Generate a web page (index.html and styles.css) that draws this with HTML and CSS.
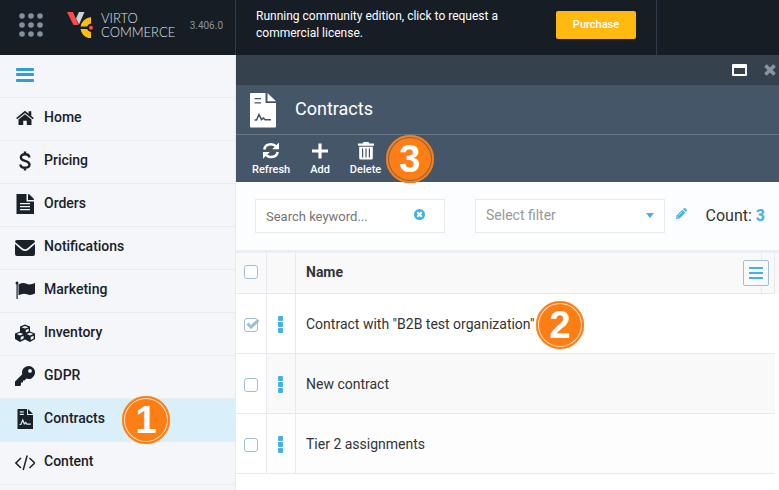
FILE: index.html
```html
<!DOCTYPE html>
<html lang="en">
<head>
<meta charset="utf-8">
<title>Contracts</title>
<link rel="stylesheet" href="styles.css">
</head>
<body>
<header class="topbar">
  <div class="brand">
    <button class="apps" aria-label="Applications">
      <svg width="24" height="24" viewBox="0 0 24 24" fill="#8390a0"><circle cx="3" cy="3" r="2.8"/><circle cx="12" cy="3" r="2.8"/><circle cx="21" cy="3" r="2.8"/><circle cx="3" cy="12" r="2.8"/><circle cx="12" cy="12" r="2.8"/><circle cx="21" cy="12" r="2.8"/><circle cx="3" cy="21" r="2.8"/><circle cx="12" cy="21" r="2.8"/><circle cx="21" cy="21" r="2.8"/></svg>
    </button>
    <a class="logo" href="#">
      <svg width="26" height="26" viewBox="0 0 26 26"><path fill="#ff4a4a" d="M0 0h6l5.500 13H6.500z"/><path fill="#d0d2d4" d="M12 0h5.500L12 12.500 9 6.500z"/><path fill="#ffbb10" d="M24 5v6.500q-3 .5-4 3H13.500Q15 6.500 24 5zM13.500 17H20q1 2.500 4 3V26.500Q15 25.500 13.500 17z"/><circle cx="24" cy="15.700" r="2" fill="#ff4a4a"/></svg>
      <span class="logo-text"><span>VIRTO</span><span>COMMERCE</span></span>
    </a>
    <span class="version">3.406.0</span>
  </div>
  <div class="license">
    <p class="license-text">Running community edition, click to request a commercial license.</p>
    <button class="purchase">Purchase</button>
  </div>
</header>
<div class="workspace">
  <nav class="sidebar">
    <div class="burger-row">
      <button class="burger" aria-label="Toggle menu"><svg width="18" height="14" viewBox="0 0 18 14" fill="#319dd5"><rect width="18" height="3" rx="1"/><rect y="5" width="18" height="3" rx="1"/><rect y="11" width="18" height="3" rx="1"/></svg></button>
    </div>
    <a class="item" href="#"><svg class="nav-icon" viewBox="0 0 20 20"><path d="M10 6.200 3.500 11.600V17h4.700v-4.300h3.600V17h4.700v-5.400z"/><path d="M10 2.800 1.200 10.100l1 1.100L10 4.900l7.800 6.300 1-1.100-2.500-2.100V3.200h-2.700v2.500z"/></svg><span>Home</span></a>
    <a class="item" href="#"><svg class="nav-icon" viewBox="0 0 20 20"><path fill="none" stroke="#1a2129" stroke-width="2.400" d="M14.300 6.500Q14.200 3.300 10 3.300T5.900 6.500Q5.900 8.800 10 9.800T14.500 13.500Q14.500 16.700 10 16.700T5.500 13.500M10 .5v3M10 16.500v3"/></svg><span>Pricing</span></a>
    <a class="item" href="#"><svg class="nav-icon" viewBox="0 0 20 20"><path fill-rule="evenodd" d="M1.500 0h10v7.500h7.500V20H1.500zM5 9v1.300h10V9zm0 3v1.300h10V12zm0 3v1.300h10V15z"/><path d="M13 0v6h6q0-1-.5-1.500L14.500.5Q14 0 13 0z"/></svg><span>Orders</span></a>
    <a class="item" href="#"><svg class="nav-icon" viewBox="0 0 20 20"><path d="M2 3h16q2 0 2 2l-7.500 6.200q-2.500 2-5 0L0 5q0-2 2-2z"/><path d="M0 7l6.500 5.700q3.500 2.500 7 0L20 7v10q0 2-2 2H2q-2 0-2-2z"/></svg><span>Notifications</span></a>
    <a class="item" href="#"><svg class="nav-icon" viewBox="0 0 20 20"><path d="M3.500 4.500q4.500-2.500 8-.7 3.500 1.700 8.500-.8v10.500q-4.500 2.500-8 .8t-8.500.9z"/><circle cx="2" cy="3" r="1.500"/><path d="M1.500 3h1.200v16H1.500z"/></svg><span>Marketing</span></a>
    <a class="item" href="#"><svg class="nav-icon" viewBox="0 0 20 20"><path fill-rule="evenodd" d="M10 1.500l5 2v5l5 2v5.500L15 19l-5-2.500L5 19l-5-3v-5.500l5-2v-5zM6.500 4.200 10 5.500l3.500-1.300L10 2.900zM10.800 7v2.600l2.900-1.300V5.700zM1.700 11 5 12.400 8.300 11 5 9.700zm10 0 3.300 1.400 3.300-1.400L15 9.700zM5.700 14v3l2.900-1.500v-2.700zm10 0v3l2.900-1.500v-2.700z"/></svg><span>Inventory</span></a>
    <a class="item" href="#"><svg class="nav-icon" viewBox="0 0 20 20"><path fill-rule="evenodd" d="M13.500 0A6.500 6.500 0 1 1 11.300 12.600L9.600 14.500H8V16.500H6V19L5 20H0V15.500L7.300 8.300A6.500 6.500 0 0 1 13.500 0zM15 3a1.900 1.900 0 1 0 0 3.800A1.900 1.900 0 0 0 15 3z"/></svg><span>GDPR</span></a>
    <a class="item active" href="#"><svg class="nav-icon" viewBox="0 0 20 20"><path fill-rule="evenodd" d="M2.500 0H12v6h6v14H2.500zM4.800 2.300v1.200h4V2.300zm0 2.500V6h4V4.800z"/><path d="M13 0v5h5z"/><path fill="none" stroke="#d9eff9" stroke-width="1.200" d="M4.500 15.500h1.300l2-4.500 1.500 4 1.500-1.500 1 1.700h4"/></svg><span>Contracts</span><span class="badge badge-nav">1</span></a>
    <a class="item" href="#"><svg class="nav-icon" viewBox="0 0 20 20"><path fill="none" stroke="#1a2129" stroke-width="1.500" d="M6 6 .9 11 6 16M14.500 6l5.200 5-5.200 5M12.200 3.500l-4 14.500"/></svg><span>Content</span></a>
  </nav>
  <main class="blade">
    <div class="blade-controls">
      <button aria-label="Maximize"><svg width="15" height="12" viewBox="0 0 15 12"><path fill="#fff" fill-rule="evenodd" d="M1 0h13q1 0 1 1v10q0 1-1 1H1q-1 0-1-1V1q0-1 1-1zM2 4v6h11V4z"/></svg></button>
      <button aria-label="Close"><svg width="12" height="12" viewBox="0 0 12 12"><path stroke="#8a949e" stroke-width="3.600" d="M1.500 1.500l9 9M10.500 1.500l-9 9"/></svg></button>
    </div>
    <div class="blade-title">
      <svg width="26" height="35" viewBox="0 0 26 35"><path fill="#fff" fill-rule="evenodd" d="M1 0h14.500v10H26v23.500q0 1-1 1H1q-1 0-1-1V1q0-1 1-1zM4.500 5v1.300H11V5zm0 4.300v1.300H11V9.300z"/><path fill="#fff" d="M17.500 0v8.300H26z"/><path fill="none" stroke="#465669" stroke-width="1.600" d="M4.500 27h2l2.500-5.500 2.500 5 2-1.500 1.500 1.700h6"/></svg>
      <h1>Contracts</h1>
    </div>
    <div class="toolbar">
      <button class="tool"><svg width="18" height="20" viewBox="0 0 18 20"><path fill="none" stroke="#fff" stroke-width="2.600" d="M2.300 8.500Q3.200 3.200 9 3.200q3.200 0 5.400 2.500M15.700 11q-1 5-6.700 5-3.200 0-5.400-2.300"/><path fill="#fff" d="M17 1.500v6.800h-6.800zM1 17.700v-6.800h6.800z"/></svg>Refresh</button>
      <button class="tool"><svg width="18" height="20" viewBox="0 0 18 20"><path stroke="#fff" stroke-width="3.200" d="M9 2.500v15M1 10h16"/></svg>Add</button>
      <button class="tool"><svg width="18" height="20" viewBox="0 0 18 20"><path fill="#fff" fill-rule="evenodd" d="M1 2.500h4.500L6.500 1h5l1 1.500H17v2.200H1zM2.200 5.700h13.600V17q0 1.500-1.500 1.500H3.700q-1.500 0-1.500-1.500zM5 7.500v9h1.200v-9zm3.400 0v9h1.200v-9zm3.400 0v9H13v-9z"/></svg>Delete<span class="badge badge-tool">3</span></button>
    </div>
    <div class="filters">
      <div class="field">
        <input type="text" placeholder="Search keyword..." aria-label="Search keyword">
        <button class="clear" aria-label="Clear search"><svg width="11" height="11" viewBox="0 0 11 11"><circle cx="5.500" cy="5.500" r="5.500" fill="#43b0e6"/><path stroke="#fff" stroke-width="2" d="M3.300 3.300l4.400 4.400M7.700 3.300L3.300 7.700"/></svg></button>
      </div>
      <div class="field field-select">
        <select aria-label="Select filter"><option>Select filter</option></select>
        <svg class="caret" width="8" height="5" viewBox="0 0 8 5"><path fill="#43b0e6" d="M0 0h8L4 5z"/></svg>
      </div>
      <button class="edit" aria-label="Edit filter"><svg width="11" height="11" viewBox="0 0 11 11"><path fill="#43b0e6" d="M0 11l.5-3.500L6.300 1.700l3 3L3.500 10.500zM7 1l1-.8q.7-.4 1.300.1l1.400 1.400q.5.600 0 1.300l-.8 1z"/><path stroke="#fff" stroke-width=".7" d="M2.500 7.500l4-4M.8 8.500l1.700 1.700"/></svg></button>
      <div class="count">Count: <b>3</b></div>
    </div>
    <div class="grid">
      <table>
        <thead>
          <tr><th class="c-check"><input type="checkbox" aria-label="Select all"></th><th class="c-menu"></th><th class="c-name">Name</th><th class="c-end"></th></tr>
        </thead>
        <tbody>
          <tr><td><span class="tick"><input type="checkbox" checked aria-label="Select Contract with B2B test organization"><svg width="16" height="14" viewBox="0 0 16 14"><path fill="none" stroke="#a0bfd4" stroke-width="3" d="M3.500 5.500l3.500 3.700L14.500 2"/></svg></span></td><td><button class="dots" aria-label="Row actions"><i></i><i></i><i></i></button></td><td colspan="2"><span class="label">Contract with "B2B test organization"<span class="badge badge-row">2</span></span></td></tr>
          <tr class="shade"><td><input type="checkbox" aria-label="Select New contract"></td><td><button class="dots" aria-label="Row actions"><i></i><i></i><i></i></button></td><td colspan="2">New contract</td></tr>
          <tr class="tint"><td><input type="checkbox" aria-label="Select Tier 2 assignments"></td><td><button class="dots" aria-label="Row actions"><i></i><i></i><i></i></button></td><td colspan="2">Tier 2 assignments</td></tr>
        </tbody>
      </table>
      <button class="columns" aria-label="Choose columns"><svg width="14" height="12" viewBox="0 0 14 12" fill="#43b0e6"><rect width="14" height="2"/><rect y="5" width="14" height="2"/><rect y="10" width="14" height="2"/></svg></button>
    </div>
  </main>
</div>
</body>
</html>
```
FILE: styles.css
```css
* { box-sizing: border-box; }
body {
  margin: 0;
  min-height: 100vh;
  display: flex;
  flex-direction: column;
  background: #fff;
  color: #333;
  font-family: Roboto, "Liberation Sans", sans-serif;
  font-size: 14px;
  overflow: hidden;
}
button {
  margin: 0;
  padding: 0;
  border: 0;
  background: none;
  font: inherit;
  color: inherit;
  cursor: pointer;
}
svg { display: block; flex: none; }
a { color: inherit; text-decoration: none; }

.topbar { display: flex; height: 55px; background: #171d24; }
.brand {
  display: flex;
  align-items: center;
  width: 236px;
  padding: 0 12px 5px 19px;
  border-right: 1px solid #303c4a;
}
.apps { margin-right: 24px; }
.logo { display: flex; align-items: center; gap: 8px; }
.logo-text {
  display: grid;
  color: #dfe1e3;
  font-family: Lato, sans-serif;
  font-size: 13px;
  font-weight: 300;
  line-height: 14px;
}
.version { margin-left: auto; color: #8a949e; font-size: 10px; }
.license {
  display: flex;
  align-items: flex-start;
  width: 421px;
  padding: 8px 20px;
  border-right: 1px solid #303c4a;
}
.license-text {
  flex: 1;
  margin: 0;
  padding-right: 50px;
  color: #fff;
  font-size: 12px;
  line-height: 17px;
}
.purchase {
  width: 80px;
  height: 28px;
  margin-top: 3px;
  padding-bottom: 2px;
  border-radius: 2px;
  background: #ffb90f;
  color: #fff;
  font-size: 11px;
  font-weight: 500;
}

.workspace { display: flex; flex: 1; }
.sidebar {
  flex: none;
  width: 236px;
  border-right: 1px solid #e6e9f1;
  background: #f4f6fa;
}
.burger-row {
  height: 43px;
  padding: 13px 16px;
  border-bottom: 1px solid #e8ecf1;
}
.item {
  position: relative;
  display: flex;
  align-items: center;
  gap: 9px;
  height: 43px;
  padding: 0 15px 2px;
  border-bottom: 1px solid #e8ecf1;
  color: #1a2129;
  font-weight: 500;
  line-height: 18px;
}
.item > span { padding-bottom: 2px; }
.item.active { background: #d9eff9; }
.nav-icon { width: 20px; height: 20px; fill: #1a2129; }

.blade { flex: 1; min-width: 0; background: #fff; }
.blade-controls {
  display: flex;
  align-items: center;
  justify-content: flex-end;
  gap: 17px;
  height: 30px;
  padding-right: 3px;
  background: #35424e;
}
.blade-title {
  display: flex;
  align-items: center;
  gap: 19px;
  height: 50px;
  padding: 2px 14px 0;
  border-bottom: 1px solid #64798a;
  background: #465669;
  color: #fff;
}
h1 { margin: 0 0 4px; font-size: 18px; font-weight: 400; }
.toolbar {
  display: flex;
  gap: 20px;
  height: 47px;
  padding: 6px 16px;
  background: #465669;
}
.tool {
  position: relative;
  display: flex;
  flex-direction: column;
  align-items: center;
  gap: 1px;
  color: #fff;
  font-size: 11px;
  font-weight: 500;
  line-height: 16px;
}
.filters {
  display: flex;
  align-items: center;
  height: 68px;
  padding: 0 14px 0 19px;
  background: #fcfdff;
}
.field { position: relative; width: 190px; }
.field-select { margin: 0 11px 0 30px; }
.field input, .field select {
  display: block;
  width: 100%;
  height: 34px;
  padding: 0 10px;
  border: 1px solid #e6e9f1;
  border-radius: 0;
  background: #fff;
  appearance: none;
  font: inherit;
}
.field input { font-size: 13px; }
.field input::placeholder { color: #757575; }
.field select { padding-bottom: 2px; color: #999; }
.clear { position: absolute; top: 10px; right: 20px; }
.caret { position: absolute; top: 14px; right: 11px; pointer-events: none; }
.edit { margin-bottom: 6px; }
.count { margin-left: auto; padding-bottom: 2px; font-size: 16px; }
.count b { color: #43b0e6; }

.grid { position: relative; border-top: 3px solid #eaedf3; background: linear-gradient(#f9f9f9 40px, #fff 40px); }
table {
  width: calc(100% - 4px);
  border-collapse: separate;
  border-spacing: 0;
  table-layout: fixed;
}
th, td {
  height: 60px;
  padding: 0;
  border-right: 1px solid #e6e9f1;
  border-bottom: 1px solid #e6e9f1;
  text-align: left;
}
th { height: 41px; padding-bottom: 2px; font-weight: 700; }
td:last-child { border-right: 0; }
.c-check { width: 31px; }
.c-menu { width: 29px; }
.c-end { width: 13px; }
th:first-child, td:first-child { padding-left: 8px; }
th:nth-child(3), td:nth-child(3) { padding-left: 10px; }
.shade td:nth-child(n+2) { background: #f9f9f9; }
.tint td:nth-child(n+2) { background: #fdfdfd; }
input[type="checkbox"] {
  display: block;
  width: 14px;
  height: 14px;
  margin: 0;
  border: 1px solid #a0bfd4;
  border-radius: 3px;
  background: #fff;
  appearance: none;
}
.tick { position: relative; display: block; }
.tick svg { position: absolute; top: 0; left: 0; }
td input[type="checkbox"] { margin-top: 3px; }
.dots { display: grid; gap: 1px; margin: 2px 0 0 11px; }
.dots i { width: 5px; height: 5px; border-radius: 1px; background: #43b0e6; }
.label { position: relative; }
.columns {
  position: absolute;
  top: 7px;
  right: 10px;
  display: grid;
  place-items: center;
  width: 26px;
  height: 26px;
  border: 1px solid #a0bfd4;
  border-radius: 2px;
  background: #f9f9f9;
}

.badge {
  position: absolute;
  z-index: 2;
  display: grid;
  place-items: center;
  width: 48px;
  height: 48px;
  border-radius: 50%;
  background: #fd7e14;
  box-shadow: inset 0 0 0 2px #fd7e14, inset 0 0 0 3px #ffe2c8;
  color: #fff;
  font: 700 38px/48px "Liberation Sans", sans-serif;
}
.badge-nav { top: -3px; left: 122px; }
.badge-row { top: -15px; left: 230px; }
.badge-tool { top: -6px; left: 36px; box-shadow: inset 0 0 0 2px #fd7e14, inset 0 0 0 3px #76665c; }
```
